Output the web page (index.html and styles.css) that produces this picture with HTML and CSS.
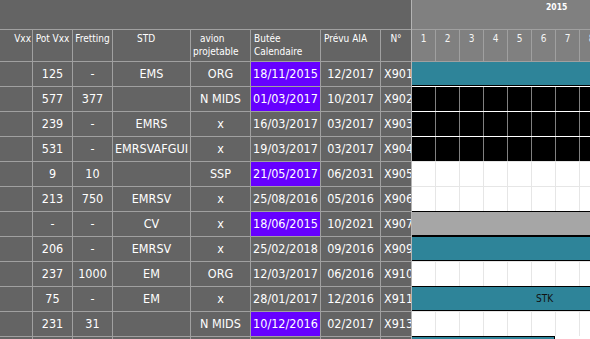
FILE: index.html
```html
<!DOCTYPE html>
<html>
<head>
<meta charset="utf-8">
<link rel="stylesheet" href="styles.css">
</head>
<body>
<div class="screen">
  <div class="table">
    <div class="band"></div>
    <div class="row head">
      <div class="c w-vxx h-right">Vxx</div>
      <div class="c w-pot">Pot Vxx</div>
      <div class="c w-fret">Fretting</div>
      <div class="c w-std h-std">STD</div>
      <div class="c w-av h-left"><div class="ind">avion</div><div>projetable</div></div>
      <div class="c w-bu h-left">Butée<br>Calendaire</div>
      <div class="c w-pr h-left">Prévu AIA</div>
      <div class="c w-no h-center">N°</div>
    </div>
    <div class="row"><div class="c w-vxx"></div><div class="c w-pot">125</div><div class="c w-fret">-</div><div class="c w-std">EMS</div><div class="c w-av">ORG</div><div class="c w-bu purple">18/11/2015</div><div class="c w-pr">12/2017</div><div class="c w-no">X901</div></div>
    <div class="row"><div class="c w-vxx"></div><div class="c w-pot">577</div><div class="c w-fret">377</div><div class="c w-std"></div><div class="c w-av">N MIDS</div><div class="c w-bu purple">01/03/2017</div><div class="c w-pr">10/2017</div><div class="c w-no">X902</div></div>
    <div class="row"><div class="c w-vxx"></div><div class="c w-pot">239</div><div class="c w-fret">-</div><div class="c w-std">EMRS</div><div class="c w-av">x</div><div class="c w-bu">16/03/2017</div><div class="c w-pr">03/2017</div><div class="c w-no">X903</div></div>
    <div class="row"><div class="c w-vxx"></div><div class="c w-pot">531</div><div class="c w-fret">-</div><div class="c w-std">EMRSVAFGUI</div><div class="c w-av">x</div><div class="c w-bu">19/03/2017</div><div class="c w-pr">03/2017</div><div class="c w-no">X904</div></div>
    <div class="row"><div class="c w-vxx"></div><div class="c w-pot">9</div><div class="c w-fret">10</div><div class="c w-std"></div><div class="c w-av">SSP</div><div class="c w-bu purple">21/05/2017</div><div class="c w-pr">06/2031</div><div class="c w-no">X905</div></div>
    <div class="row"><div class="c w-vxx"></div><div class="c w-pot">213</div><div class="c w-fret">750</div><div class="c w-std">EMRSV</div><div class="c w-av">x</div><div class="c w-bu">25/08/2016</div><div class="c w-pr">05/2016</div><div class="c w-no">X906</div></div>
    <div class="row"><div class="c w-vxx"></div><div class="c w-pot">-</div><div class="c w-fret">-</div><div class="c w-std">CV</div><div class="c w-av">x</div><div class="c w-bu purple">18/06/2015</div><div class="c w-pr">10/2021</div><div class="c w-no">X907</div></div>
    <div class="row"><div class="c w-vxx"></div><div class="c w-pot">206</div><div class="c w-fret">-</div><div class="c w-std">EMRSV</div><div class="c w-av">x</div><div class="c w-bu">25/02/2018</div><div class="c w-pr">09/2016</div><div class="c w-no">X909</div></div>
    <div class="row"><div class="c w-vxx"></div><div class="c w-pot">237</div><div class="c w-fret">1000</div><div class="c w-std">EM</div><div class="c w-av">ORG</div><div class="c w-bu">12/03/2017</div><div class="c w-pr">06/2016</div><div class="c w-no">X910</div></div>
    <div class="row"><div class="c w-vxx"></div><div class="c w-pot">75</div><div class="c w-fret">-</div><div class="c w-std">EM</div><div class="c w-av">x</div><div class="c w-bu">28/01/2017</div><div class="c w-pr">12/2016</div><div class="c w-no">X911</div></div>
    <div class="row"><div class="c w-vxx"></div><div class="c w-pot">231</div><div class="c w-fret">31</div><div class="c w-std"></div><div class="c w-av">N MIDS</div><div class="c w-bu purple">10/12/2016</div><div class="c w-pr">02/2017</div><div class="c w-no">X913</div></div>
    <div class="row"><div class="c w-vxx"></div><div class="c w-pot"></div><div class="c w-fret"></div><div class="c w-std"></div><div class="c w-av"></div><div class="c w-bu"></div><div class="c w-pr"></div><div class="c w-no"></div></div>
  </div>
  <div class="gantt">
    <div class="year"><span>2015</span></div>
    <div class="grow days"><div class="d">1</div><div class="d">2</div><div class="d">3</div><div class="d">4</div><div class="d">5</div><div class="d">6</div><div class="d">7</div><div class="d">8</div></div>
    <div class="grow barrow"><div class="bar teal first"></div></div>
    <div class="grow black"><div class="d"></div><div class="d"></div><div class="d"></div><div class="d"></div><div class="d"></div><div class="d"></div><div class="d"></div><div class="d"></div></div>
    <div class="grow black"><div class="d"></div><div class="d"></div><div class="d"></div><div class="d"></div><div class="d"></div><div class="d"></div><div class="d"></div><div class="d"></div></div>
    <div class="grow black"><div class="d"></div><div class="d"></div><div class="d"></div><div class="d"></div><div class="d"></div><div class="d"></div><div class="d"></div><div class="d"></div></div>
    <div class="grow"><div class="d"></div><div class="d"></div><div class="d"></div><div class="d"></div><div class="d"></div><div class="d"></div><div class="d"></div><div class="d"></div></div>
    <div class="grow"><div class="d"></div><div class="d"></div><div class="d"></div><div class="d"></div><div class="d"></div><div class="d"></div><div class="d"></div><div class="d"></div></div>
    <div class="grow barrow"><div class="bar grey"></div></div>
    <div class="grow barrow"><div class="bar teal"></div></div>
    <div class="grow"><div class="d"></div><div class="d"></div><div class="d"></div><div class="d"></div><div class="d"></div><div class="d"></div><div class="d"></div><div class="d"></div></div>
    <div class="grow barrow"><div class="bar teal label"><span>STK</span></div></div>
    <div class="grow"><div class="d"></div><div class="d"></div><div class="d"></div><div class="d"></div><div class="d"></div><div class="d"></div><div class="d"></div><div class="d"></div></div>
    <div class="grow barrow"><div class="bar teal short"></div></div>
  </div>
</div>
</body>
</html>
```
FILE: styles.css
```css
html, body {
  margin: 0;
  padding: 0;
}
body {
  background: #646464;
  font-family: "DejaVu Sans Condensed", "DejaVu Sans", sans-serif;
  color: #ffffff;
  overflow: hidden;
}
.screen {
  display: flex;
  width: 590px;
  height: 339px;
  overflow: hidden;
}
.table {
  width: 411px;
  flex: none;
  background: #646464;
}
.band {
  height: 29px;
}
.row {
  display: flex;
  height: 25px;
  box-sizing: border-box;
  border-top: 1px solid #a0a0a0;
}
.row.head {
  height: 32px;
}
.c {
  flex: none;
  box-sizing: border-box;
  border-right: 1px solid #a0a0a0;
  overflow: hidden;
  white-space: nowrap;
  text-align: center;
  font-size: 12.5px;
  line-height: 24px;
}
.w-vxx { width: 33px; }
.w-pot { width: 40px; }
.w-fret { width: 40px; }
.w-std { width: 78px; }
.w-av { width: 60px; }
.w-bu { width: 70px; }
.w-pr { width: 60px; }
.w-no {
  width: 30px;
  border-right: none;
  text-align: left;
  padding-left: 3px;
}
.head .c {
  font-size: 10px;
  line-height: 13px;
  padding-top: 2px;
  white-space: nowrap;
}
.head .h-right {
  text-align: right;
  padding-right: 1px;
}
.head .h-std {
  padding-right: 11px;
}
.head .h-left {
  text-align: left;
  padding-left: 3px;
}
.head .w-av {
  padding-left: 2px;
}
.head .ind {
  padding-left: 7px;
}
.head .h-center {
  text-align: center;
  padding-left: 0;
}
.purple {
  background: #6600ff;
}

/* gantt */
.gantt {
  flex: 1;
  overflow: hidden;
  border-left: 1px solid #b4b4b4;
  background: #ffffff;
}
.year {
  height: 29px;
  box-sizing: border-box;
  background: #808080;
  font-size: 8.5px;
  font-weight: bold;
  line-height: 10px;
  padding: 2px 0 0 134px;
}
.grow {
  display: flex;
  width: 192px;
  height: 25px;
  box-sizing: border-box;
  border-top: 1px solid #e6e6e6;
}
.d {
  flex: none;
  width: 24px;
  box-sizing: border-box;
  border-right: 1px solid #e6e6e6;
}
.days {
  height: 32px;
  background: #808080;
  border-top-color: #a0a0a0;
}
.days .d {
  border-right-color: #a0a0a0;
  font-size: 10px;
  line-height: 13px;
  padding-top: 2px;
  text-align: center;
  color: #f4f4f4;
}
.black {
  background: #000000;
  border-top-color: #ffffff;
}
.black .d {
  border-right-color: #808080;
}
.barrow {
  border-top: none;
}
.bar {
  width: 100%;
  height: 25px;
  box-sizing: border-box;
  border-top: 1px solid #000;
  border-bottom: 1px solid #000;
}
.bar.first {
  border-top-color: #a0a0a0;
}
.teal {
  background: #2e8499;
}
.grey {
  background: #a6a6a6;
}
.label {
  display: flex;
  align-items: center;
  padding-left: 124px;
  font-size: 10px;
  color: #111111;
}
.short {
  width: 143px;
  border-right: 1px solid #000;
}
```
